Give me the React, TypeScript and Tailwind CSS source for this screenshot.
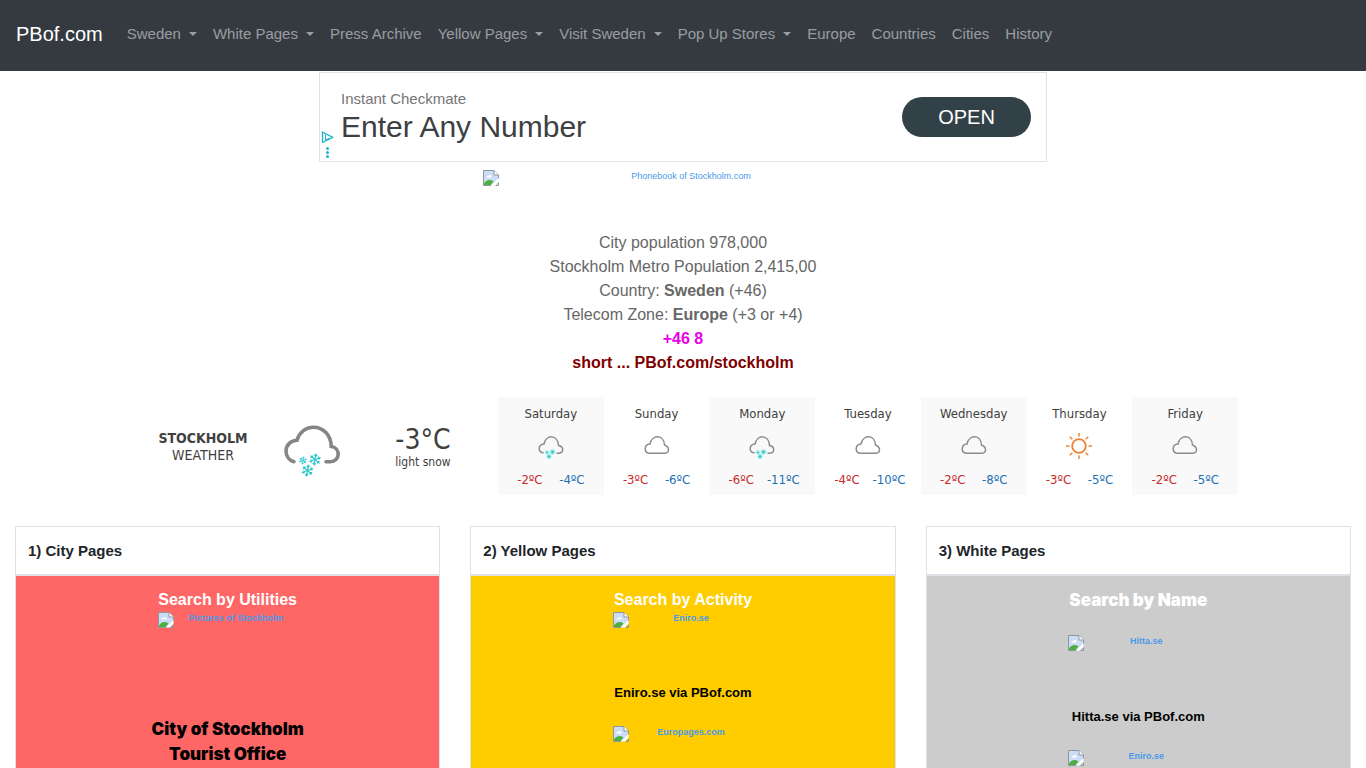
import type { ReactNode } from "react";

const navItems = [
  { label: "Sweden", menu: true },
  { label: "White Pages", menu: true },
  { label: "Press Archive", menu: false },
  { label: "Yellow Pages", menu: true },
  { label: "Visit Sweden", menu: true },
  { label: "Pop Up Stores", menu: true },
  { label: "Europe", menu: false },
  { label: "Countries", menu: false },
  { label: "Cities", menu: false },
  { label: "History", menu: false },
];

const forecast = [
  { day: "Saturday", icon: "snow", high: -2, low: -4 },
  { day: "Sunday", icon: "cloud", high: -3, low: -6 },
  { day: "Monday", icon: "snow", high: -6, low: -11 },
  { day: "Tuesday", icon: "cloud", high: -4, low: -10 },
  { day: "Wednesday", icon: "cloud", high: -2, low: -8 },
  { day: "Thursday", icon: "sun", high: -3, low: -5 },
  { day: "Friday", icon: "cloud", high: -2, low: -5 },
];

function MissingImageIcon() {
  return (
    <svg width="16" height="16" viewBox="0 0 16 16" className="shrink-0" aria-hidden="true">
      <path d="M.5.5h10.5l4.500 4.500v4l-6.500 6.500H.5z" fill="#cbdcf7" />
      <path d="M3.500 7.500c0-1.300 1.200-1.800 1.800-1.500.6-1.500 2.800-1.300 2.900.4 1 0 1 1.100.2 1.100z" fill="#fff" />
      <path d="M1 15v-1.500c2-3.500 6-4.500 9.500-2L7.500 15z" fill="#4caf3f" />
      <path d="M8 15.500l7.500-7.500v4l-3.500 3.500z" fill="#fff" />
      <path d="M13 14.500l1.500-1.500v1.500z" fill="#4caf3f" />
      <path d="M8 15.500H.5V.5H11l4.500 4.500v3.500M12.500 15.500h3v-3" fill="none" stroke="#8f979d" />
      <path d="M11 .5V5h4.500" fill="#fff" stroke="#8f979d" />
    </svg>
  );
}

// image link that shows its alt text while the picture is missing
function ImageLink({ alt, className }: { alt: string; className: string }) {
  return (
    <a href="#" className={`mx-auto flex items-start text-[9px] leading-3 text-[#4a9ae8] ${className}`}>
      <MissingImageIcon />
      <span className="flex-1 text-center">{alt}</span>
    </a>
  );
}

function Flake({ x, y, r }: { x: number; y: number; r: number }) {
  return (
    <g transform={`translate(${x} ${y})`} stroke="#2cc5c9" strokeWidth={r * 0.2} fill="none">
      {[10, 70, 130, 190, 250, 310].map((a) => (
        <path key={a} transform={`rotate(${a})`} d={`M0 0V${-r}M${-r * 0.24} ${-r * 0.8}L0 ${-r * 0.5}L${r * 0.24} ${-r * 0.8}`} />
      ))}
    </g>
  );
}

function CloudIcon({ snow = false }: { snow?: boolean }) {
  return (
    <svg width="28" height="28" viewBox="0 0 28 28" fill="none" aria-hidden="true">
      <path
        d={
          snow
            ? "M6 20.800C.8 20 .8 12.500 7 12C9 2 21 2.500 21.500 13.500C27 14.500 27 20.500 22 21.200H20"
            : "M6 21.200C.8 20.500 .8 12.500 7 12C9 2 21 2.500 21.500 13C27 15 26.500 21.200 22 21.200z"
        }
        stroke="#8c8c8c"
        strokeWidth="1.500"
        strokeLinecap="round"
      />
      {snow && (
        <>
          <g fill="#a5eeee">
            <circle cx="10" cy="20.500" r="2.200" />
            <circle cx="15.500" cy="20" r="2.800" />
            <circle cx="12" cy="24.500" r="2.600" />
          </g>
          <g fill="#35c3c7">
            <circle cx="10" cy="20.500" r=".9" />
            <circle cx="15.500" cy="20" r="1.400" />
            <circle cx="12" cy="24.500" r="1.300" />
          </g>
        </>
      )}
    </svg>
  );
}

function SunIcon() {
  return (
    <svg width="28" height="28" viewBox="0 0 28 28" fill="none" stroke="#ee8433" aria-hidden="true">
      <circle cx="14" cy="14" r="6.800" strokeWidth="1.800" />
      {[0, 45, 90, 135, 180, 225, 270, 315].map((a) => (
        <path key={a} transform={`rotate(${a} 14 14)`} d="M14 1v3.500" strokeWidth="1.500" />
      ))}
    </svg>
  );
}

function SnowCloudLarge() {
  return (
    <svg width="60" height="60" viewBox="0 0 60 60" fill="none" aria-hidden="true">
      <path
        d="M11 44.700C6 43.500 3 39 3 34C3 28 8 23.200 14 23.200C16.500 15 23 10.300 30.500 10.300C40 10.300 48.200 18 48.200 29.500C52.500 30 55.200 33.500 55.200 37.300C55.200 41.500 52 44.700 47.500 44.700H43"
        stroke="#858585"
        strokeWidth="3.600"
        strokeLinecap="round"
      />
      <Flake x={20} y={43.5} r={4} />
      <Flake x={32} y={42.5} r={6} />
      <Flake x={24.5} y={53.5} r={6} />
    </svg>
  );
}

function Navbar() {
  return (
    <nav className="flex items-center bg-[#343a40] px-4 pt-3.5 pb-[17px]">
      <a href="#" className="mr-4 text-xl leading-10 text-white">
        PBof.com
      </a>
      <ul className="flex text-[15px] leading-10 text-white/50">
        {navItems.map((item) => (
          <li key={item.label} className="px-2">
            <a href="#" className="flex items-center gap-2 whitespace-nowrap hover:text-white/75">
              {item.label}
              {item.menu && <span className="border-x-4 border-t-4 border-x-transparent border-t-current" />}
            </a>
          </li>
        ))}
      </ul>
    </nav>
  );
}

function AdBanner() {
  return (
    <aside className="relative mx-auto mt-px flex h-[90px] w-full max-w-[728px] items-center justify-between border border-[#dfe3e6] pr-[15px] pl-[21px]">
      <div>
        <p className="text-[15px] leading-5 text-[#757575]">Instant Checkmate</p>
        <p className="text-3xl leading-9 text-[#3c4043]">Enter Any Number</p>
      </div>
      <button type="button" className="h-10 w-[129px] rounded-full bg-[#324148] text-xl text-white">
        OPEN
      </button>
      <svg width="13" height="28" viewBox="0 0 13 28" className="absolute bottom-0.5 left-px" aria-hidden="true">
        <path d="M1.500 1v10.500l10.300-5.200z" fill="none" stroke="#1cb5c9" strokeWidth="1.300" strokeLinejoin="round" />
        <path d="M4.500 3.500v5.500l3.500-1.800" fill="none" stroke="#1cb5c9" />
        <g fill="#1cb5c9">
          <circle cx="6.500" cy="17.500" r="1.500" />
          <circle cx="6.500" cy="21.500" r="1.500" />
          <circle cx="6.500" cy="25.500" r="1.500" />
        </g>
      </svg>
    </aside>
  );
}

function Weather() {
  return (
    <section className="mx-auto mt-[22px] flex w-full max-w-[1110px] font-['DejaVu_Sans_Condensed','DejaVu_Sans',sans-serif] text-[#404040] [font-stretch:condensed]">
      <div className="grid w-1/3 grid-cols-3 items-center px-5 pt-0.5 text-center">
        <div className="text-sm leading-[17px]">
          <p className="font-bold">STOCKHOLM</p>
          <p>WEATHER</p>
        </div>
        <div className="flex justify-center">
          <SnowCloudLarge />
        </div>
        <div className="pt-0.5">
          <p className="text-[28px] leading-7">-3°C</p>
          <p className="text-xs leading-4">light snow</p>
        </div>
      </div>
      <div className="grid w-2/3 grid-cols-7 text-[13px] leading-4">
        {forecast.map((f) => (
          <div key={f.day} className="flex flex-col items-center pt-[9px] pb-[7px] odd:bg-[#f9f9f9]">
            <p>{f.day}</p>
            <div className="flex h-[50px] items-center pb-0.5">
              {f.icon === "sun" ? <SunIcon /> : <CloudIcon snow={f.icon === "snow"} />}
            </div>
            <p className="flex text-center">
              <span className="w-[42px] text-[#c92a2a]">{f.high}ºC</span>
              <span className="w-[42px] text-[#1b6fb5]">{f.low}ºC</span>
            </p>
          </div>
        ))}
      </div>
    </section>
  );
}

function DirectoryTable({ title, color, children }: { title: string; color: string; children: ReactNode }) {
  return (
    <table className="w-full border-collapse self-start">
      <thead>
        <tr>
          <th className="border border-b-2 border-[#dee2e6] p-3 text-left text-[15px] leading-[23px] font-bold text-[#212529]">
            {title}
          </th>
        </tr>
      </thead>
      <tbody>
        <tr>
          <td className={`border border-[#dee2e6] p-3 text-center font-bold ${color}`}>{children}</td>
        </tr>
      </tbody>
    </table>
  );
}

export default function App() {
  return (
    <div className="h-screen overflow-hidden bg-white font-['Liberation_Sans',Arial,sans-serif]">
      <Navbar />
      <AdBanner />

      <header className="mt-2 text-center text-base leading-6 text-[#666]">
        <ImageLink alt="Phonebook of Stockholm.com" className="h-[61px] w-[400px]" />
        <p>City population 978,000</p>
        <p>Stockholm Metro Population 2,415,00</p>
        <p>
          Country: <b>Sweden</b> (+46)
        </p>
        <p>
          Telecom Zone: <b>Europe</b> (+3 or +4)
        </p>
        <p className="font-bold text-[#e800e8]">+46 8</p>
        <p className="font-bold text-[#800000]">short ... PBof.com/stockholm</p>
      </header>

      <Weather />

      <main className="mt-[31px] grid grid-cols-3 gap-[30px] px-[15px]">
        <DirectoryTable title="1) City Pages" color="bg-[#ff6666]">
          <h2 className="text-base leading-6 text-white">Search by Utilities</h2>
          <ImageLink alt="Pictures of Stockholm" className="h-[105px] w-[140px]" />
          <div className="font-['Inter',sans-serif] text-[17px] leading-[25px] font-black text-black">
            <p>City of Stockholm</p>
            <p>Tourist Office</p>
          </div>
        </DirectoryTable>

        <DirectoryTable title="2) Yellow Pages" color="bg-[#ffcc00]">
          <h2 className="text-base leading-6 text-white">Search by Activity</h2>
          <ImageLink alt="Eniro.se" className="h-[69px] w-[140px]" />
          <p className="mb-[21px] text-[13px] leading-6 text-black">Eniro.se via PBof.com</p>
          <ImageLink alt="Europages.com" className="h-[69px] w-[140px]" />
        </DirectoryTable>

        <DirectoryTable title="3) White Pages" color="bg-[#cccccc]">
          <h2 className="mb-[22px] font-['Inter',sans-serif] text-[17px] leading-[25px] font-black text-white">
            Search by Name
          </h2>
          <ImageLink alt="Hitta.se" className="h-[70px] w-[140px]" />
          <p className="mb-[21px] text-[13px] leading-6 text-black">Hitta.se via PBof.com</p>
          <ImageLink alt="Eniro.se" className="h-[70px] w-[140px]" />
        </DirectoryTable>
      </main>
    </div>
  );
}
